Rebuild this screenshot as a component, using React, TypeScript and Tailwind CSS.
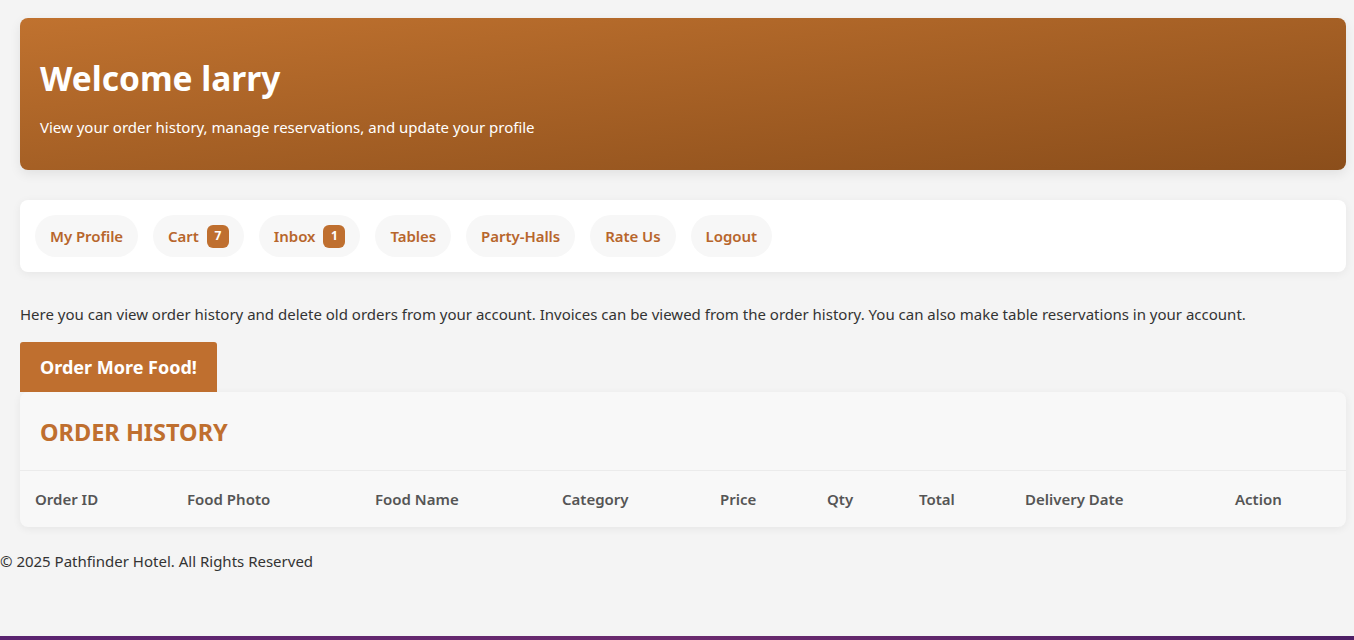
import type { ReactNode } from "react"

const navItems: { label: string; badge?: string }[] = [
  { label: "My Profile" },
  { label: "Cart", badge: "7" },
  { label: "Inbox", badge: "1" },
  { label: "Tables" },
  { label: "Party-Halls" },
  { label: "Rate Us" },
  { label: "Logout" },
]

const columns: { label: string; w: string }[] = [
  { label: "Order ID", w: "w-[152px]" },
  { label: "Food Photo", w: "w-[188px]" },
  { label: "Food Name", w: "w-[187px]" },
  { label: "Category", w: "w-[158px]" },
  { label: "Price", w: "w-[107px]" },
  { label: "Qty", w: "w-[92px]" },
  { label: "Total", w: "w-[106px]" },
  { label: "Delivery Date", w: "w-[210px]" },
  { label: "Action", w: "" },
]

const NavPill = ({ children }: { children: ReactNode }) => (
  <a className="flex h-[42px] items-center gap-2 rounded-full bg-[#f7f7f7] px-[15px] text-[15px] font-semibold tracking-[-0.05px] text-[#b7662c]">
    {children}
  </a>
)

export default function App() {
  return (
    <div className="min-h-[640px] bg-[#f4f4f4] font-['Noto_Sans','Open_Sans',sans-serif] text-[#333]">
      <div className="pl-5 pr-2 pt-[18px]">
        {/* welcome banner */}
        <div className="h-[152px] rounded-lg bg-gradient-to-br from-[#c0722f] to-[#8b4e1b] px-5 pt-[36px] text-white shadow-[0_4px_12px_rgba(0,0,0,0.08)]">
          <h1 className="text-[33.5px] font-bold leading-[48px]">Welcome larry</h1>
          <p className="mt-[14px] text-[15px]">View your order history, manage reservations, and update your profile</p>
        </div>

        {/* account nav */}
        <div className="mt-[30px] flex h-[72px] items-center gap-[15px] rounded-lg bg-white px-[15px] shadow-[0_2px_10px_rgba(0,0,0,0.06)]">
          {navItems.map((item) => (
            <NavPill key={item.label}>
              {item.label}
              {item.badge && (
                <span className="flex h-[23px] w-[22px] items-center justify-center rounded-md bg-[#bf6f2f] text-[12px] font-bold text-white">
                  {item.badge}
                </span>
              )}
            </NavPill>
          ))}
        </div>

        <p className="mt-[30px] text-[15px] leading-6">
          Here you can view order history and delete old orders from your account. Invoices can be viewed from the order history. You can also make table reservations in your account.
        </p>

        <button className="mt-[16px] h-[50px] rounded-t-[3px] bg-[#bf6f2f] px-5 text-[18px] font-bold text-white">
          Order More Food!
        </button>

        {/* order history */}
        <div className="rounded-lg bg-[#f8f8f8] shadow-[0_2px_8px_rgba(0,0,0,0.06)]">
          <div className="flex h-[79px] items-center border-b border-[#ebebeb] px-5 pt-[3px]">
            <h2 className="text-[23.5px] font-bold text-[#bf6f2f]">ORDER HISTORY</h2>
          </div>
          <div className="flex h-[56px] items-center px-[15px] text-[15px] font-semibold text-[#555]">
            {columns.map((c) => (
              <div key={c.label} className={c.w}>
                {c.label}
              </div>
            ))}
          </div>
        </div>
      </div>

      <footer className="mt-[23px] text-[15px]">© 2025 Pathfinder Hotel. All Rights Reserved</footer>
      <div className="mt-[63px] h-[4px] bg-gradient-to-r from-[#5a2370] via-[#6b2a6e] to-[#4e1f66]" />
    </div>
  )
}
